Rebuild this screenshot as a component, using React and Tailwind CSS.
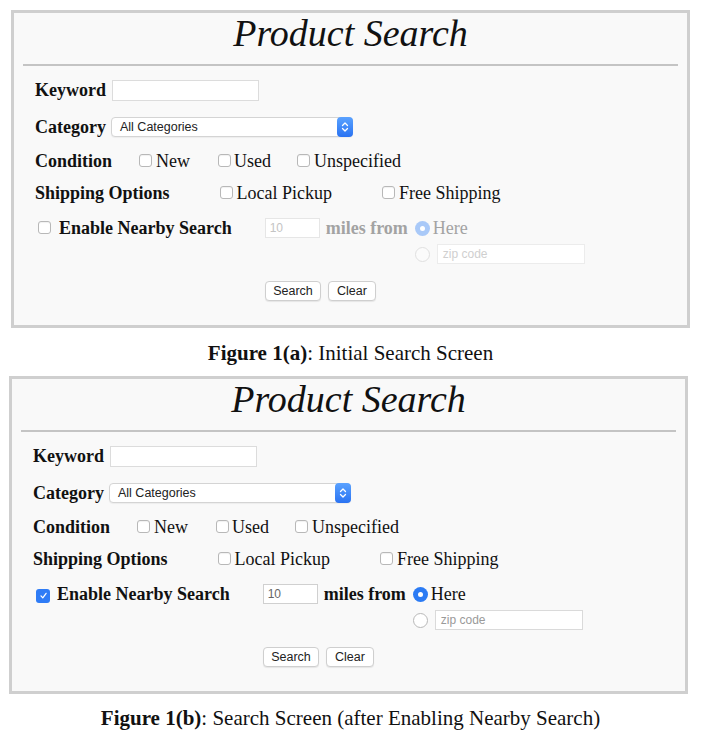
import React from "react";

const serif = "font-['Liberation_Serif','Times_New_Roman',serif]";
const sans = "font-['Liberation_Sans',Arial,sans-serif]";

function Box({ checked }) {
  if (checked) {
    return (
      <span className="inline-flex w-[14px] h-[14px] shrink-0 rounded-[3px] bg-[#2f7cf6] items-center justify-center">
        <svg width="9" height="9" viewBox="0 0 10 10">
          <path d="M2.2 5.4 L4.2 7.6 L7.9 2.6" stroke="white" strokeWidth="1.4" fill="none" strokeLinecap="round" strokeLinejoin="round" />
        </svg>
      </span>
    );
  }
  return (
    <span className="inline-block w-[13px] h-[13px] shrink-0 rounded-[3px] border border-[#b8b8b8] bg-white shadow-[inset_0_1px_1px_rgba(0,0,0,0.06)]" />
  );
}

function Radio({ on, disabled }) {
  if (on) {
    return (
      <span className={`inline-flex w-[15px] h-[15px] shrink-0 rounded-full items-center justify-center ${disabled ? "bg-[#a9c9f8]" : "bg-[#2b7bf4]"}`}>
        <span className="w-[5px] h-[5px] rounded-full bg-white" />
      </span>
    );
  }
  return (
    <span className={`inline-block w-[15px] h-[15px] shrink-0 rounded-full border ${disabled ? "border-[#e0e0e0] bg-[#fbfbfb]" : "border-[#b8b8b8] bg-white"}`} />
  );
}

function Panel({ enabled, shift }) {
  const dis = !enabled;
  return (
    <div className={`${shift} w-[679px] border-[3px] border-[#cfcfcf] bg-[#f9f9f9] ${serif} text-[#111]`}>
      <div className="h-[40px] leading-[40px] text-center italic text-[38px]">Product Search</div>
      <div className="mx-[9px] mt-[11px] h-[2px] bg-[#c4c4c4]" />
      <div className="pl-[21px] pt-[14px] pb-[24px]">
        {/* Keyword */}
        <div className="flex items-center h-[21px]">
          <span className="text-[18px] font-bold leading-[21px]">Keyword</span>
          <span className="ml-[6px] w-[147px] h-[21px] border border-[#dcdcdc] bg-white" />
        </div>
        {/* Category */}
        <div className="flex items-center h-[20px] mt-[16px]">
          <span className="text-[18px] font-bold leading-[20px]">Category</span>
          <div className="ml-[5px] w-[242px] h-[20px] rounded-[4px] border border-[#d4d4d4] bg-white flex items-center justify-between shadow-[0_1px_1px_rgba(0,0,0,0.05)]">
            <span className={`${sans} text-[12.5px] text-[#222] pl-[8px] leading-[18px]`}>All Categories</span>
            <span className="w-[16px] h-[20px] -mr-px rounded-[4px] bg-gradient-to-b from-[#5aa2ff] to-[#2a72f2] flex items-center justify-center">
              <svg width="8" height="12" viewBox="0 0 8 12">
                <path d="M1.5 4.5 L4 2 L6.5 4.5" stroke="white" strokeWidth="1.3" fill="none" strokeLinecap="round" strokeLinejoin="round" />
                <path d="M1.5 7.5 L4 10 L6.5 7.5" stroke="white" strokeWidth="1.3" fill="none" strokeLinecap="round" strokeLinejoin="round" />
              </svg>
            </span>
          </div>
        </div>
        {/* Condition */}
        <div className="flex items-center h-[20px] mt-[14px] text-[18px] leading-[20px]">
          <span className="font-bold">Condition</span>
          <span className="ml-[27px]"><Box /></span>
          <span className="ml-[4px]">New</span>
          <span className="ml-[28px]"><Box /></span>
          <span className="ml-[3px]">Used</span>
          <span className="ml-[26px]"><Box /></span>
          <span className="ml-[4px]">Unspecified</span>
        </div>
        {/* Shipping */}
        <div className="flex items-center h-[20px] mt-[12px] text-[18px] leading-[20px]">
          <span className="font-bold">Shipping Options</span>
          <span className="ml-[50px]"><Box /></span>
          <span className="ml-[4px]">Local Pickup</span>
          <span className="ml-[50px]"><Box /></span>
          <span className="ml-[4px]">Free Shipping</span>
        </div>
        {/* Nearby */}
        <div className="flex items-start mt-[15px] text-[18px] leading-[20px]">
          <div className="flex items-center h-[20px]">
            <span className="ml-[3px]"><Box checked={enabled} /></span>
            <span className={`font-bold ${enabled ? "ml-[7px]" : "ml-[8px]"}`}>Enable Nearby Search</span>
            <span className={`ml-[33px] w-[55px] h-[20px] border bg-white flex items-center ${dis ? "border-[#e6e6e6]" : "border-[#d0d0d0]"}`}>
              <span className={`${sans} text-[12px] pl-[4px] ${dis ? "text-[#c4c4c4]" : "text-[#666]"}`}>10</span>
            </span>
            <span className={`ml-[6px] font-bold ${dis ? "text-[#a3a3a3]" : ""}`}>miles from</span>
          </div>
          <div className="ml-[7px] flex flex-col">
            <div className="flex items-center h-[20px]">
              <Radio on disabled={dis} />
              <span className={`ml-[3px] ${dis ? "text-[#a3a3a3]" : ""}`}>Here</span>
            </div>
            <div className="flex items-center h-[20px] mt-[6px]">
              <Radio disabled={dis} />
              <span className={`ml-[7px] w-[148px] h-[20px] border bg-white flex items-center ${dis ? "border-[#ececec]" : "border-[#dadada]"}`}>
                <span className={`${sans} text-[12px] pl-[5px] ${dis ? "text-[#cfcfcf]" : "text-[#9a9a9a]"}`}>zip code</span>
              </span>
            </div>
          </div>
        </div>
        {/* Buttons */}
        <div className={`flex items-center mt-[17px] ml-[230px] ${sans} text-[12.5px] text-[#222]`}>
          <span className="w-[56px] h-[20px] rounded-[4px] border border-[#cfcfcf] bg-white flex items-center justify-center shadow-[0_1px_1px_rgba(0,0,0,0.08)]">Search</span>
          <span className="ml-[7px] w-[48px] h-[20px] rounded-[4px] border border-[#cfcfcf] bg-white flex items-center justify-center shadow-[0_1px_1px_rgba(0,0,0,0.08)]">Clear</span>
        </div>
      </div>
    </div>
  );
}

export default function App() {
  return (
    <div className={`w-[713px] h-[731px] bg-white overflow-hidden pt-[10px] ${serif}`}>
      <div className="ml-[10px] w-[681px]">
        <Panel enabled={false} shift="ml-[1px]" />
        <div className="mt-[13px] h-[24px] leading-[24px] text-[21px] text-center text-[#111]">
          <span className="font-bold">Figure 1(a)</span>: Initial Search Screen
        </div>
        <div className="mt-[11px]">
          <Panel enabled shift="-ml-[1px]" />
        </div>
        <div className="mt-[12px] h-[24px] leading-[24px] text-[21px] text-center text-[#111]">
          <span className="font-bold">Figure 1(b)</span>: Search Screen (after Enabling Nearby Search)
        </div>
      </div>
    </div>
  );
}
